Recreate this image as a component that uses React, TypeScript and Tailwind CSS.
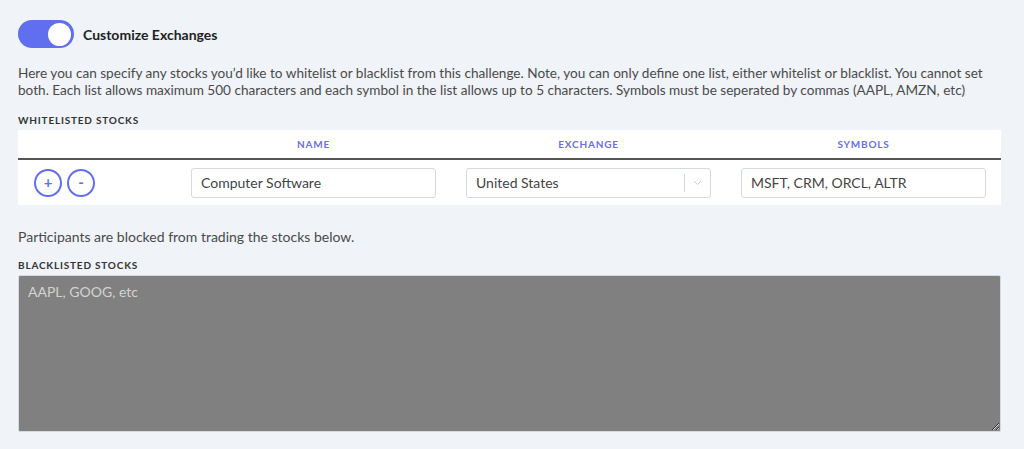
import React, { useState } from "react";

const font = { fontFamily: "Lato, 'Open Sans', sans-serif" };

function Toggle({ on, onChange }: { on: boolean; onChange: () => void }) {
  return (
    <button
      type="button"
      onClick={onChange}
      className={`flex h-[28px] w-[56px] items-center rounded-full px-[3px] ${
        on ? "justify-end bg-[#5f6ff0]" : "justify-start bg-gray-300"
      }`}
    >
      <span className="block h-[23px] w-[23px] rounded-full bg-white" />
    </button>
  );
}

function CircleButton({ label }: { label: string }) {
  return (
    <button
      type="button"
      className="flex h-[28px] w-[28px] items-center justify-center rounded-full border-2 border-[#5f6ff0] bg-white text-[15px] font-bold leading-none text-[#5f6ff0]"
    >
      {label}
    </button>
  );
}

export default function App() {
  const [enabled, setEnabled] = useState(true);

  return (
    <div
      className="min-h-screen bg-[#f0f3f8] pl-[18px] pr-[23px] pt-[20px] text-[#4a4a4a]"
      style={font}
    >
      {/* Toggle header */}
      <div className="flex items-center gap-[9px]">
        <Toggle on={enabled} onChange={() => setEnabled(!enabled)} />
        <span className="text-[14px] font-bold text-[#222]">
          Customize Exchanges
        </span>
      </div>

      {/* Description */}
      <p className="mt-[17px] text-[13.6px] leading-[17px] text-[#4a4a4a]">
        Here you can specify any stocks you’d like to whitelist or blacklist
        from this challenge. Note, you can only define one list, either
        whitelist or blacklist. You cannot set both. Each list allows maximum
        500 characters and each symbol in the list allows up to 5 characters.
        Symbols must be seperated by commas (AAPL, AMZN, etc)
      </p>

      {/* Whitelist */}
      <div className="mt-[14px] text-[10px] font-bold uppercase tracking-[0.08em] text-[#333]">
        Whitelisted Stocks
      </div>
      <div className="mt-[2px] bg-white">
        <div className="grid h-[30px] grid-cols-[158px_1fr_1fr_1fr] items-center border-b-2 border-[#555] text-[10px] font-bold uppercase tracking-[0.08em] text-[#6b6ee6]">
          <div />
          <div className="text-center">Name</div>
          <div className="text-center">Exchange</div>
          <div className="text-center">Symbols</div>
        </div>
        <div className="grid h-[45px] grid-cols-[158px_1fr_1fr_1fr] items-center">
          <div className="flex gap-[5px] pl-[16px]">
            <CircleButton label="+" />
            <CircleButton label="-" />
          </div>
          <div className="px-[15px]">
            <input
              defaultValue="Computer Software"
              className="h-[30px] w-full rounded-[3px] border border-[#d5dadf] bg-white px-[9px] text-[14px] text-[#444] outline-none"
            />
          </div>
          <div className="px-[15px]">
            <div className="flex h-[30px] w-full items-center rounded-[3px] border border-[#d5dadf] bg-white text-[14px] text-[#444]">
              <span className="flex-1 px-[9px]">United States</span>
              <span className="h-[18px] w-px bg-[#d5dadf]" />
              <span className="flex w-[25px] items-center justify-center">
                <svg width="9" height="6" viewBox="0 0 9 6" fill="none">
                  <path d="M1 1l3.5 3.5L8 1" stroke="#c8ccd0" strokeWidth="1" />
                </svg>
              </span>
            </div>
          </div>
          <div className="px-[15px]">
            <input
              defaultValue="MSFT, CRM, ORCL, ALTR"
              className="h-[30px] w-full rounded-[3px] border border-[#d5dadf] bg-white px-[9px] text-[14px] text-[#444] outline-none"
            />
          </div>
        </div>
      </div>

      {/* Blacklist */}
      <p className="mt-[21px] text-[14px] text-[#4a4a4a]">
        Participants are blocked from trading the stocks below.
      </p>
      <div className="mt-[11px] text-[10px] font-bold uppercase tracking-[0.08em] text-[#333]">
        Blacklisted Stocks
      </div>
      <textarea
        placeholder="AAPL, GOOG, etc"
        className="mt-[2px] block h-[157px] w-full rounded-[2px] border border-[#d5dadf] bg-[#808080] px-[9px] py-[5px] text-[14px] text-[#eee] outline-none placeholder:text-[#d3d3d3]"
        style={font}
      />
    </div>
  );
}
